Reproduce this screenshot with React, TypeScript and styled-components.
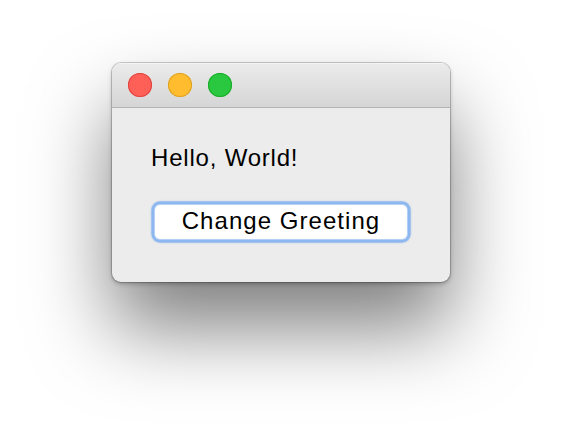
import React from "react";
import styled, { createGlobalStyle } from "styled-components";

const Global = createGlobalStyle`
  html, body { margin: 0; padding: 0; background: #ffffff; }
  body { font-family: "Liberation Sans", Arial, Helvetica, sans-serif; }
`;

const Stage = styled.div`
  width: 562px;
  height: 442px;
  padding: 63px 0 0 112px;
  box-sizing: border-box;
  overflow: hidden;
`;

const Window = styled.div`
  width: 338px;
  height: 219px;
  border-radius: 9px;
  background: #ececec;
  box-shadow: 0 0 0 1px rgba(0, 0, 0, 0.18), 0 2px 4px rgba(0, 0, 0, 0.25),
    0 46px 80px rgba(0, 0, 0, 0.5);
  display: flex;
  flex-direction: column;
  overflow: hidden;
`;

const TitleBar = styled.div`
  height: 45px;
  flex: none;
  background: linear-gradient(#ebebeb, #d5d5d5);
  border-bottom: 1px solid #b4b4b4;
  display: flex;
  align-items: center;
  gap: 16px;
  padding-left: 16px;
  box-sizing: border-box;
  box-shadow: inset 0 1px 0 #f4f4f4;
`;

const Light = styled.span<{ $fill: string; $edge: string }>`
  width: 24px;
  height: 24px;
  border-radius: 50%;
  background: ${(p) => p.$fill};
  box-shadow: inset 0 0 0 1px ${(p) => p.$edge};
  display: block;
`;

const Content = styled.div`
  padding: 35px 0 0 39px;
  display: flex;
  flex-direction: column;
  align-items: flex-start;
  gap: 32px;
`;

const Greeting = styled.div`
  font-size: 24px;
  line-height: 30px;
  color: #000;
  letter-spacing: 0.8px;
`;

const Button = styled.button`
  width: 252px;
  height: 34px;
  margin-left: 4px;
  border-radius: 5px;
  border: none;
  padding: 0 0 3px;
  background: #fff;
  box-shadow: 0 0 0 1px #b5d0f4, 0 0 0 3.5px #8cb8ef, 0 0 1.5px 4px rgba(110, 160, 230, 0.45);
  font-family: "Liberation Sans", Arial, Helvetica, sans-serif;
  font-size: 24px;
  color: #000;
  letter-spacing: 1.05px;
  display: flex;
  align-items: center;
  justify-content: center;
`;

export default function App() {
  return (
    <>
      <Global />
      <Stage>
        <Window>
          <TitleBar>
            <Light $fill="#fe5f57" $edge="#e0443e" />
            <Light $fill="#febc2e" $edge="#dea123" />
            <Light $fill="#29c840" $edge="#1aab29" />
          </TitleBar>
          <Content>
            <Greeting>Hello, World!</Greeting>
            <Button>Change Greeting</Button>
          </Content>
        </Window>
      </Stage>
    </>
  );
}
